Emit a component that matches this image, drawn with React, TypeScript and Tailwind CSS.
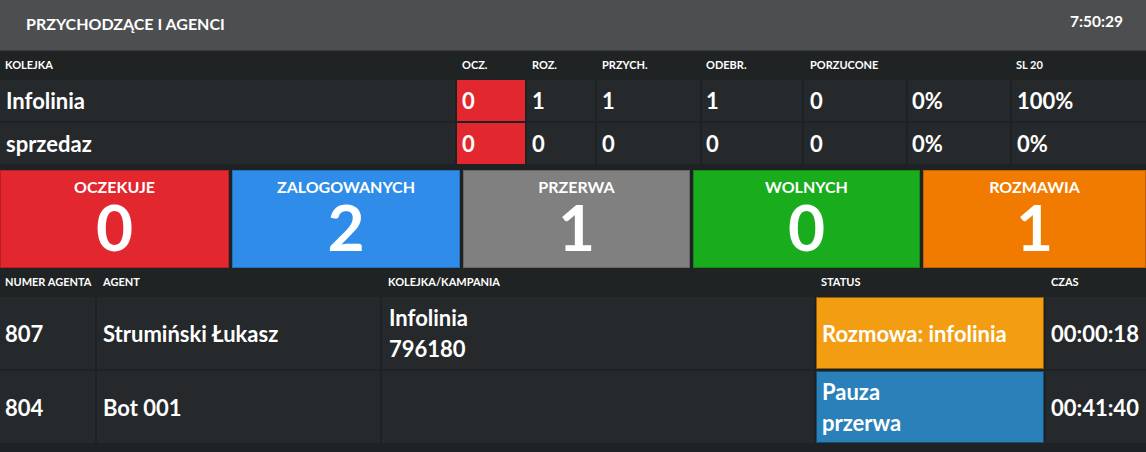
const queues = [
  { name: "Infolinia", ocz: "0", roz: "1", przych: "1", odebr: "1", porz: "0", porzPct: "0%", sl: "100%" },
  { name: "sprzedaz", ocz: "0", roz: "0", przych: "0", odebr: "0", porz: "0", porzPct: "0%", sl: "0%" },
];

const tiles = [
  { label: "OCZEKUJE", value: "0", bg: "bg-[#e3272f]" },
  { label: "ZALOGOWANYCH", value: "2", bg: "bg-[#2f8ce9]" },
  { label: "PRZERWA", value: "1", bg: "bg-[#808080]" },
  { label: "WOLNYCH", value: "0", bg: "bg-[#19ac1c]" },
  { label: "ROZMAWIA", value: "1", bg: "bg-[#f07b00]" },
];

const agents = [
  {
    num: "807",
    name: "Strumiński Łukasz",
    queue: ["Infolinia", "796180"],
    status: ["Rozmowa: infolinia"],
    statusBg: "bg-[#f39d12]",
    time: "00:00:18",
  },
  {
    num: "804",
    name: "Bot 001",
    queue: [],
    status: ["Pauza", "przerwa"],
    statusBg: "bg-[#2a80b9]",
    time: "00:41:40",
  },
];

const qCols = "grid grid-cols-[455px_68px_68px_103px_100px_102px_102px_1fr] gap-x-[2px]";
const aCols = "grid grid-cols-[95px_283px_432px_228px_1fr] gap-x-[2px]";

export default function App() {
  return (
    <div
      className="w-[1146px] h-[452px] overflow-hidden bg-[#1f2224] text-white font-bold"
      style={{ fontFamily: "Lato, 'Noto Sans', sans-serif" }}
    >
      {/* top bar */}
      <div className="h-[51px] bg-[#4d4e50] flex items-center justify-between pl-[26px] pr-[23px] border-b border-[#3a3b3d]">
        <span className="text-[16px] pb-[3px]">PRZYCHODZĄCE I AGENCI</span>
        <span className="text-[15.5px] pb-[6px]">7:50:29</span>
      </div>

      {/* queues */}
      <div className={`${qCols} h-[29px] items-center bg-[#202324] text-[11px]`}>
        <span className="pl-[5px]">KOLEJKA</span>
        <span className="pl-[5px]">OCZ.</span>
        <span className="pl-[5px]">ROZ.</span>
        <span className="pl-[5px]">PRZYCH.</span>
        <span className="pl-[4px]">ODEBR.</span>
        <span className="pl-[6px]">PORZUCONE</span>
        <span />
        <span className="pl-[4px]">SL 20</span>
      </div>
      <div className="flex flex-col gap-y-[2px]">
        {queues.map((q) => (
          <div key={q.name} className={`${qCols} h-[41px] text-[22px]`}>
            <div className="bg-[#26292b] flex items-center pl-[6px]">{q.name}</div>
            <div className="bg-[#e3272f] flex items-center pl-[5px]">{q.ocz}</div>
            <div className="bg-[#26292b] flex items-center pl-[5px]">{q.roz}</div>
            <div className="bg-[#26292b] flex items-center pl-[5px]">{q.przych}</div>
            <div className="bg-[#26292b] flex items-center pl-[4px]">{q.odebr}</div>
            <div className="bg-[#26292b] flex items-center pl-[6px]">{q.porz}</div>
            <div className="bg-[#26292b] flex items-center pl-[4px]">{q.porzPct}</div>
            <div className="bg-[#26292b] flex items-center pl-[5px]">{q.sl}</div>
          </div>
        ))}
      </div>

      {/* summary tiles */}
      <div className="grid grid-cols-[229px_228px_227px_227px_1fr] gap-x-[3px] mt-[6px] h-[98px]">
        {tiles.map((t) => (
          <div key={t.label} className={`${t.bg} flex flex-col items-center border border-black/20`}>
            <span className="text-[16px] mt-[6px] leading-[19px]">{t.label}</span>
            <span className="text-[64px] leading-[48px] mt-[7px]">{t.value}</span>
          </div>
        ))}
      </div>

      {/* agents */}
      <div className={`${aCols} h-[29px] items-center bg-[#202324] text-[11px]`}>
        <span className="pl-[5px]">NUMER AGENTA</span>
        <span className="pl-[6px]">AGENT</span>
        <span className="pl-[6px]">KOLEJKA/KAMPANIA</span>
        <span className="pl-[5px]">STATUS</span>
        <span className="pl-[5px]">CZAS</span>
      </div>
      <div className="flex flex-col gap-y-[2px]">
        {agents.map((a) => (
          <div key={a.num} className={`${aCols} h-[72px] text-[22px] leading-[31px]`}>
            <div className="bg-[#26292b] flex items-center pl-[5px]">{a.num}</div>
            <div className="bg-[#26292b] flex items-center pl-[6px]">{a.name}</div>
            <div className="bg-[#26292b] flex flex-col justify-center pl-[7px]">
              {a.queue.map((l) => (
                <span key={l}>{l}</span>
              ))}
            </div>
            <div className={`${a.statusBg} flex flex-col justify-center pl-[5px] border border-black/40`}>
              {a.status.map((l) => (
                <span key={l}>{l}</span>
              ))}
            </div>
            <div className="bg-[#26292b] flex items-center pl-[5px]">{a.time}</div>
          </div>
        ))}
      </div>
    </div>
  );
}
